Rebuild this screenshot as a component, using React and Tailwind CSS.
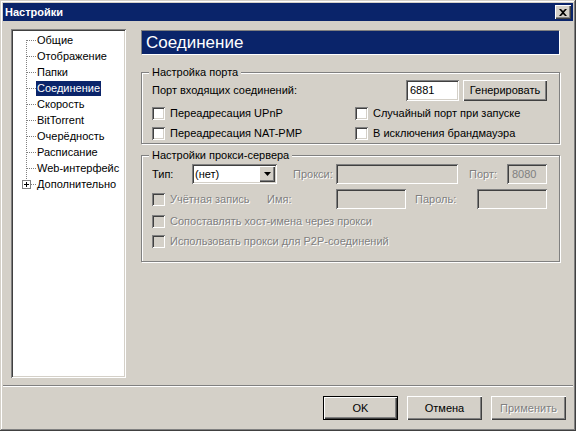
import React from "react";

const SUNKEN =
  "shadow-[inset_1px_1px_0_#808080,inset_-1px_-1px_0_#ffffff,inset_2px_2px_0_#404040,inset_-2px_-2px_0_#d4d0c8]";

function TreeRow({ label, index, last, selected }) {
  return (
    <div className="flex items-center h-[16px]">
      <svg width="23" height="16" className="shrink-0">
        {index === 0 && (
          <line x1="13.5" y1="8" x2="13.5" y2="16" stroke="#808080" strokeDasharray="1 1" />
        )}
        {index > 0 && !last && (
          <line x1="13.5" y1="0" x2="13.5" y2="16" stroke="#808080" strokeDasharray="1 1" />
        )}
        {last && (
          <>
            <line x1="13.5" y1="0" x2="13.5" y2="4" stroke="#808080" strokeDasharray="1 1" />
            <rect x="9.5" y="4.5" width="8" height="8" fill="#ffffff" stroke="#808080" />
            <line x1="11" y1="8.5" x2="16" y2="8.5" stroke="#000000" />
            <line x1="13.5" y1="6" x2="13.5" y2="11" stroke="#000000" />
            <line x1="18" y1="8.5" x2="23" y2="8.5" stroke="#808080" strokeDasharray="1 1" />
          </>
        )}
        {!last && (
          <line x1="14" y1="8.5" x2="23" y2="8.5" stroke="#808080" strokeDasharray="1 1" />
        )}
      </svg>
      <span
        className={
          selected
            ? "px-[1px] leading-[15px] bg-[#0a246a] text-white whitespace-nowrap"
            : "px-[1px] leading-[15px] whitespace-nowrap"
        }
      >
        {label}
      </span>
    </div>
  );
}

function Check({ label, disabled }) {
  return (
    <div className="flex items-center h-[20px]">
      <div
        className={
          disabled
            ? "w-[13px] h-[13px] shrink-0 bg-[#d4d0c8] " + SUNKEN
            : "w-[13px] h-[13px] shrink-0 bg-white " + SUNKEN
        }
      />
      <span
        className={
          disabled
            ? "ml-[5px] whitespace-nowrap text-[#808080] [text-shadow:1px_1px_0_#ffffff]"
            : "ml-[5px] whitespace-nowrap"
        }
      >
        {label}
      </span>
    </div>
  );
}

function Btn({ children, def, disabled }) {
  return (
    <div
      className={
        def
          ? "w-[75px] h-[24px] border border-black flex items-center justify-center shadow-[inset_1px_1px_0_#ffffff,inset_-1px_-1px_0_#404040,inset_-2px_-2px_0_#808080]"
          : "w-[75px] h-[24px] flex items-center justify-center shadow-[inset_1px_1px_0_#ffffff,inset_-1px_-1px_0_#404040,inset_-2px_-2px_0_#808080]"
      }
    >
      <span
        className={
          disabled ? "text-[#808080] [text-shadow:1px_1px_0_#ffffff]" : ""
        }
      >
        {children}
      </span>
    </div>
  );
}

const DIS = "text-[#808080] [text-shadow:1px_1px_0_#ffffff] whitespace-nowrap";

export default function App() {
  const items = [
    "Общие",
    "Отображение",
    "Папки",
    "Соединение",
    "Скорость",
    "BitTorrent",
    "Очерёдность",
    "Расписание",
    "Web-интерфейс",
    "Дополнительно",
  ];
  return (
    <div className="w-[576px] h-[431px] bg-[#d4d0c8] font-['Liberation_Sans',Arial,sans-serif] text-[11px] text-black p-[3px] flex flex-col overflow-hidden select-none shadow-[inset_-1px_-1px_0_#404040,inset_1px_1px_0_#d4d0c8,inset_-2px_-2px_0_#808080,inset_2px_2px_0_#ffffff]">
      {/* title bar */}
      <div className="h-[18px] shrink-0 bg-[#0a246a] flex items-center pl-[2px] pr-[2px]">
        <span className="text-white font-bold leading-[14px]">Настройки</span>
        <div className="ml-auto w-[16px] h-[14px] bg-[#d4d0c8] flex items-center justify-center shadow-[inset_1px_1px_0_#ffffff,inset_-1px_-1px_0_#404040,inset_-2px_-2px_0_#808080]">
          <svg width="8" height="7" viewBox="0 0 8 7">
            <path d="M0 0 L2 0 L4 2 L6 0 L8 0 L5 3.5 L8 7 L6 7 L4 5 L2 7 L0 7 L3 3.5 Z" fill="#000" />
          </svg>
        </div>
      </div>

      {/* main */}
      <div className="flex mt-[8px] h-[349px] shrink-0 pl-[8px]">
        <div className={"w-[115px] h-full bg-white pl-[2px] pt-[3px] " + SUNKEN}>
          {items.map((it, i) => (
            <TreeRow
              key={it}
              label={it}
              index={i}
              last={i === items.length - 1}
              selected={i === 3}
            />
          ))}
        </div>

        <div className="ml-[15px] w-[419px] flex flex-col">
          <div className="mt-[1px] h-[25px] bg-[#0a246a] border border-t-[#808080] border-l-[#808080] border-b-white border-r-white flex items-center pl-[4px] text-white text-[17px]">
            Соединение
          </div>

          {/* group 1 */}
          <div className="relative mt-[17px] h-[72px] border border-[#808080] shadow-[inset_1px_1px_0_#ffffff,1px_1px_0_#ffffff] pt-[7px] pl-[10px] pr-[12px]">
            <span className="absolute left-[7px] top-[-7px] px-[3px] bg-[#d4d0c8] leading-[13px]">
              Настройка порта
            </span>
            <div className="flex items-center h-[21px]">
              <span>Порт входящих соединений:</span>
              <div className={"ml-auto w-[53px] h-[21px] bg-white flex items-center pl-[4px] " + SUNKEN}>
                6881
              </div>
              <div className="ml-[4px] w-[84px] h-[21px] flex items-center justify-center shadow-[inset_1px_1px_0_#ffffff,inset_-1px_-1px_0_#404040,inset_-2px_-2px_0_#808080]">
                Генерировать
              </div>
            </div>
            <div className="mt-[2px] grid grid-cols-[203px_1fr]">
              <Check label="Переадресация UPnP" />
              <Check label="Случайный порт при запуске" />
              <Check label="Переадресация NAT-PMP" />
              <Check label="В исключения брандмауэра" />
            </div>
          </div>

          {/* group 2 */}
          <div className="relative mt-[11px] h-[107px] border border-[#808080] shadow-[inset_1px_1px_0_#ffffff,1px_1px_0_#ffffff] pt-[8px] pl-[10px] pr-[12px]">
            <span className="absolute left-[7px] top-[-7px] px-[3px] bg-[#d4d0c8] leading-[13px]">
              Настройки прокси-сервера
            </span>
            <div className="flex items-center h-[20px]">
              <span className="w-[40px] shrink-0">Тип:</span>
              <div className={"w-[85px] h-[20px] shrink-0 bg-white flex items-center pl-[3px] pr-[2px] " + SUNKEN}>
                <span>(нет)</span>
                <div className="ml-auto w-[16px] h-[16px] bg-[#d4d0c8] flex items-center justify-center shadow-[inset_1px_1px_0_#ffffff,inset_-1px_-1px_0_#404040,inset_-2px_-2px_0_#808080]">
                  <svg width="7" height="4" viewBox="0 0 7 4">
                    <path d="M0 0 H7 L3.5 4 Z" fill="#000" />
                  </svg>
                </div>
              </div>
              <span className={"ml-[16px] w-[43px] shrink-0 " + DIS}>Прокси:</span>
              <div className={"w-[122px] h-[20px] shrink-0 bg-[#d4d0c8] " + SUNKEN} />
              <span className={"ml-[11px] w-[38px] shrink-0 " + DIS}>Порт:</span>
              <div className={"w-[40px] h-[20px] shrink-0 bg-[#d4d0c8] flex items-center pl-[5px] text-[#808080] " + SUNKEN}>
                8080
              </div>
            </div>
            <div className="mt-[5px] flex items-center h-[20px]">
              <div className="w-[115px] shrink-0">
                <Check label="Учётная запись" disabled />
              </div>
              <span className={"w-[69px] shrink-0 " + DIS}>Имя:</span>
              <div className={"w-[70px] h-[20px] shrink-0 bg-[#d4d0c8] " + SUNKEN} />
              <span className={"ml-[9px] w-[62px] shrink-0 " + DIS}>Пароль:</span>
              <div className={"w-[70px] h-[20px] shrink-0 bg-[#d4d0c8] " + SUNKEN} />
            </div>
            <div className="mt-[2px]">
              <Check label="Сопоставлять хост-имена через прокси" disabled />
              <Check label="Использовать прокси для P2P-соединений" disabled />
            </div>
          </div>
        </div>
      </div>

      {/* separator */}
      <div className="mt-[7px] h-[2px] shrink-0 border-t border-t-[#808080] border-b border-b-white" />

      {/* buttons */}
      <div className="mt-[9px] flex justify-end gap-[9px] pr-[7px]">
        <Btn def>OK</Btn>
        <Btn>Отмена</Btn>
        <Btn disabled>Применить</Btn>
      </div>
    </div>
  );
}
